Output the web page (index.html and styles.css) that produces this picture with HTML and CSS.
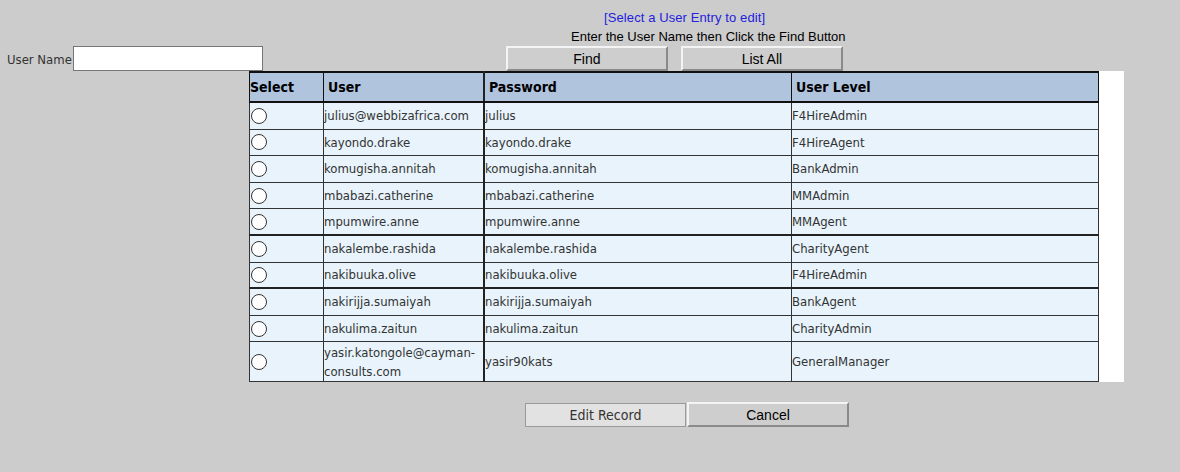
FILE: index.html
```html
<!DOCTYPE html>
<html>
<head>
<meta charset="utf-8">
<link rel="stylesheet" href="styles.css">
</head>
<body>
<div class="hdr">
  <div class="title">[Select a User Entry to edit]</div>
  <div class="hint">Enter the User Name then Click the Find Button</div>
</div>
<div class="searchbar">
  <label class="lbl">User Name</label><input class="uname" type="text">
  <div class="actions">
    <button class="btn">Find</button>
    <button class="btn">List All</button>
  </div>
</div>
<div class="gridwrap">
  <table class="grid">
    <thead>
      <tr><th class="c-sel">Select</th><th class="c-user">User</th><th class="c-pass">Password</th><th class="c-lvl">User Level</th></tr>
    </thead>
    <tbody>
      <tr><td><input class="radio" type="radio" name="u"></td><td>julius@webbizafrica.com</td><td>julius</td><td>F4HireAdmin</td></tr>
      <tr><td><input class="radio" type="radio" name="u"></td><td>kayondo.drake</td><td>kayondo.drake</td><td>F4HireAgent</td></tr>
      <tr><td><input class="radio" type="radio" name="u"></td><td>komugisha.annitah</td><td>komugisha.annitah</td><td>BankAdmin</td></tr>
      <tr><td><input class="radio" type="radio" name="u"></td><td>mbabazi.catherine</td><td>mbabazi.catherine</td><td>MMAdmin</td></tr>
      <tr class="thick"><td><input class="radio" type="radio" name="u"></td><td>mpumwire.anne</td><td>mpumwire.anne</td><td>MMAgent</td></tr>
      <tr><td><input class="radio" type="radio" name="u"></td><td>nakalembe.rashida</td><td>nakalembe.rashida</td><td>CharityAgent</td></tr>
      <tr class="thick"><td><input class="radio" type="radio" name="u"></td><td>nakibuuka.olive</td><td>nakibuuka.olive</td><td>F4HireAdmin</td></tr>
      <tr><td><input class="radio" type="radio" name="u"></td><td>nakirijja.sumaiyah</td><td>nakirijja.sumaiyah</td><td>BankAgent</td></tr>
      <tr><td><input class="radio" type="radio" name="u"></td><td>nakulima.zaitun</td><td>nakulima.zaitun</td><td>CharityAdmin</td></tr>
      <tr class="tall"><td><input class="radio" type="radio" name="u"></td><td>yasir.katongole@cayman-consults.com</td><td>yasir90kats</td><td>GeneralManager</td></tr>
    </tbody>
  </table>
</div>
<div class="footer">
  <button class="btn-dis" disabled>Edit Record</button><button class="btn btn-cancel">Cancel</button>
</div>
</body>
</html>
```
FILE: styles.css
```css
html, body {
  margin: 0;
  padding: 0;
  background: #cccccc;
}
body {
  font-family: "DejaVu Sans Condensed", "DejaVu Sans", sans-serif;
  font-size: 13px;
  color: #333;
}
.hdr {
  font-family: "Liberation Sans", Arial, sans-serif;
  font-size: 13px;
  line-height: 19px;
  padding-top: 8px;
}
.title {
  color: #2222dd;
  padding-left: 604px;
  letter-spacing: 0.1px;
}
.hint {
  color: #000;
  padding-left: 571px;
}
.searchbar {
  display: flex;
  align-items: flex-end;
  height: 25px;
  padding-left: 7px;
}
.lbl {
  line-height: 18px;
  padding-bottom: 2px;
  color: #333;
  padding-right: 1px;
}
.uname {
  box-sizing: border-box;
  width: 190px;
  height: 25px;
  margin: 0;
  border: 1px solid #777;
  background: #fff;
  padding: 0 2px;
}
.actions {
  display: flex;
  gap: 13px;
  margin-left: 243px;
  align-self: flex-start;
}
.btn {
  box-sizing: border-box;
  width: 162px;
  height: 25px;
  margin: 0;
  padding: 0;
  background: #cecece;
  border: 2px solid;
  border-color: #f4f4f4 #8a8a8a #8a8a8a #f4f4f4;
  font-family: "Liberation Sans", Arial, sans-serif;
  font-size: 14px;
  color: #000;
}
.gridwrap {
  margin-left: 249px;
  width: 875px;
  background: #fff;
}
.grid {
  width: 850px;
  border-collapse: collapse;
  border-top: 2px solid #111;
  border-bottom: 1px solid #222;
  border-left: 1px solid #222;
  border-right: 1px solid #222;
}
.grid th {
  background: #b0c4de;
  color: #000;
  font-weight: bold;
  font-size: 14px;
  text-align: left;
  height: 28px;
  padding: 0 0 0 4px;
  border: 1px solid #111;
  border-bottom: 2px solid #111;
}
.grid th.c-sel {
  padding-left: 0;
  width: 73px;
}
.grid th.c-user { width: 155px; }
.grid th.c-pass { width: 302px; }
.grid td {
  background: #e8f3fc;
  border: 1px solid #333;
  padding: 0;
  height: 25.6px;
  vertical-align: middle;
  line-height: 19px;
}
.grid td:nth-child(2),
.grid th:nth-child(2) {
  border-right: 2px solid #222;
}
.grid tr.thick td {
  border-bottom: 2px solid #222;
  height: 24.6px;
}
.grid tr.tall td {
  height: 39px;
}
.radio {
  appearance: none;
  -webkit-appearance: none;
  display: block;
  box-sizing: border-box;
  width: 16px;
  height: 16px;
  margin: 0 0 0 1px;
  border: 1px solid #333;
  border-radius: 50%;
  background: #fff;
}
.footer {
  display: flex;
  align-items: flex-end;
  margin-top: 20px;
  padding-left: 525px;
}
.btn-dis {
  box-sizing: border-box;
  width: 161px;
  height: 24px;
  margin: 0 1px 0 0;
  padding: 0;
  background: #e2e2e2;
  border: 1px solid #9a9a9a;
  font-family: "DejaVu Sans Condensed", "DejaVu Sans", sans-serif;
  font-size: 14px;
  color: #333;
}
.btn-cancel {
  height: 25px;
  width: 162px;
}
```
